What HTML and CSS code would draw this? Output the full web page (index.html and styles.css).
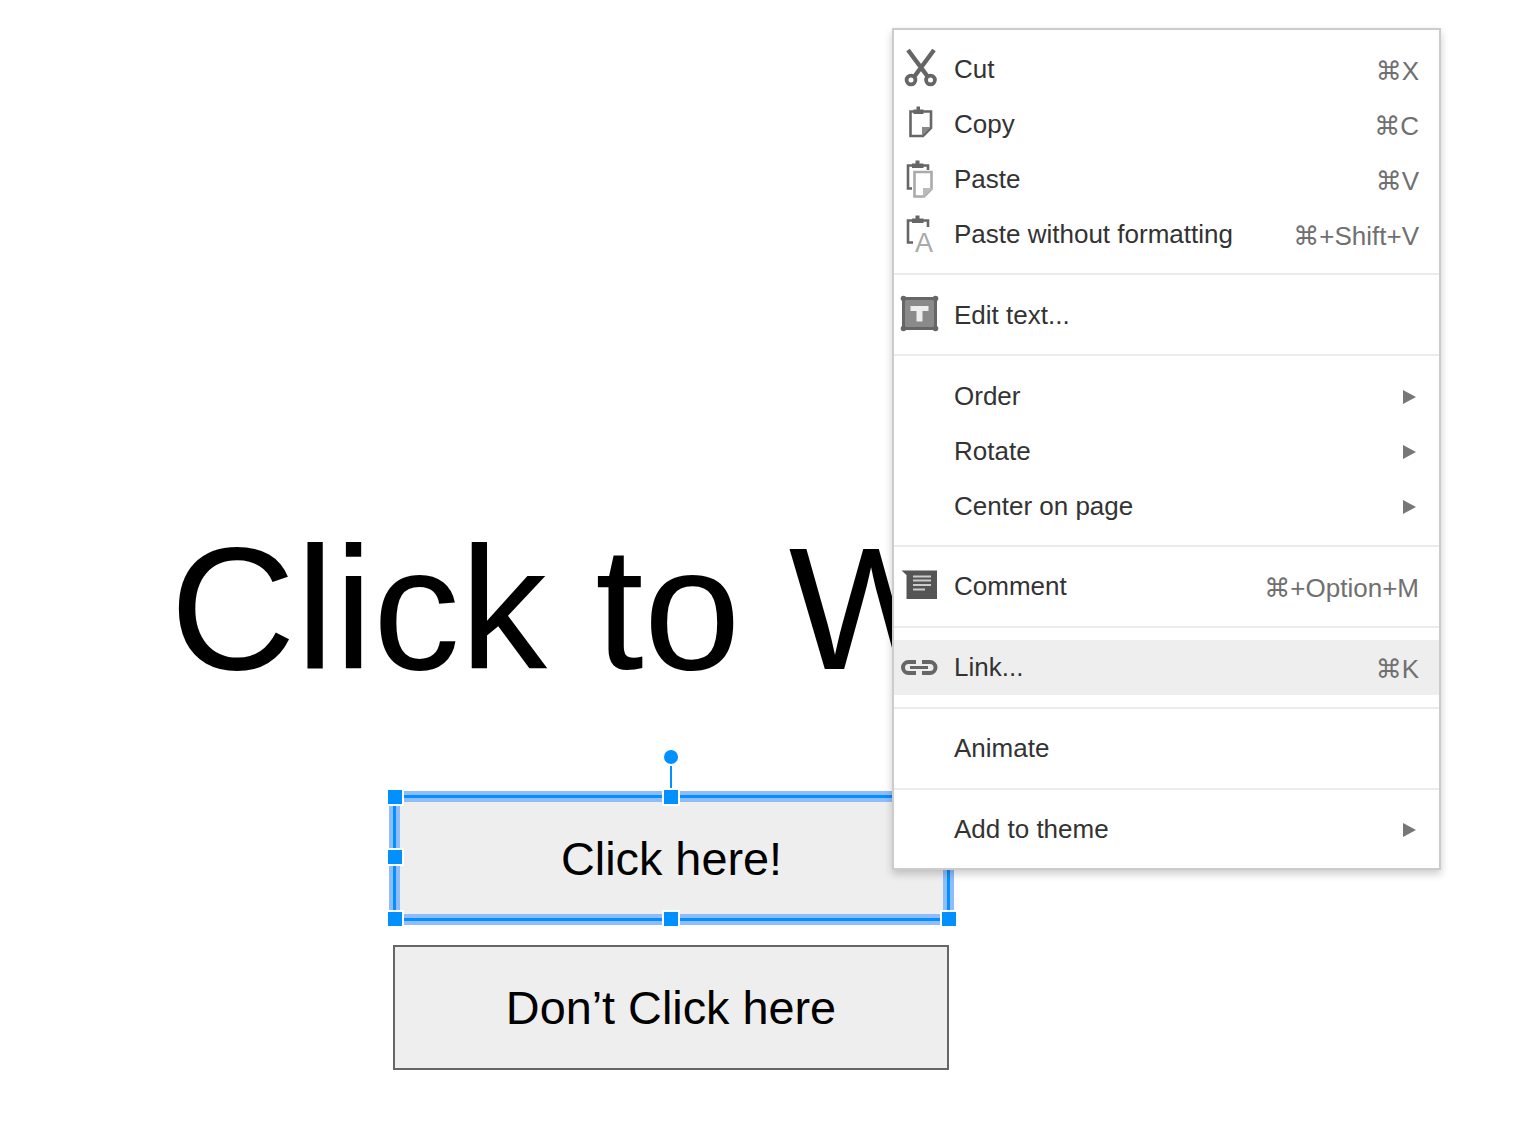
FILE: index.html
```html
<!DOCTYPE html>
<html lang="en">
<head>
    <meta charset="UTF-8">
    <title>Slide context menu</title>
    <link rel="stylesheet" href="styles.css">
</head>
<body>
    <div class="slide">
        <div class="slide-title">Click to W</div>

        <div class="shape shape-selected">
            Click here!
            <span class="rotate-stem"></span>
            <span class="rotate-knob"></span>
            <span class="handle h-tl"></span>
            <span class="handle h-tc"></span>
            <span class="handle h-ml"></span>
            <span class="handle h-bl"></span>
            <span class="handle h-bc"></span>
            <span class="handle h-br"></span>
        </div>

        <div class="shape shape-plain">Don’t Click here</div>

        <div class="menu">
            <div class="menu-item">
                <svg class="icon" viewBox="0 0 36 44">
                    <g fill="none" stroke="#666" stroke-width="3.8">
                        <path d="M7 3 27 30M33 3 13 30" stroke-width="4.4"/>
                        <circle cx="10" cy="33" r="4.4"/>
                        <circle cx="29.5" cy="33" r="4.4"/>
                    </g>
                </svg>
                <span class="label">Cut</span>
                <span class="shortcut"><span class="cmd">⌘</span>X</span>
            </div>
            <div class="menu-item">
                <svg class="icon" viewBox="0 0 36 44">
                    <path d="M13 9.5H9.5V34H22L30 26V9.5H22" fill="none" stroke="#666" stroke-width="2.6"/>
                    <path d="M12.5 12V7.5H15.5V4.5H19V7.5H22.5V12Z" fill="#666"/>
                    <path d="M21 34V25H30Z" fill="#888"/>
                </svg>
                <span class="label">Copy</span>
                <span class="shortcut"><span class="cmd">⌘</span>C</span>
            </div>
            <div class="menu-item">
                <svg class="icon" viewBox="0 0 36 44">
                    <path d="M11 8.5H7V31.5H11M22 8.5H27V13" fill="none" stroke="#666" stroke-width="2.6"/>
                    <path d="M11 11V6.5H14.5V3.5H18.5V6.5H22.5V11Z" fill="#666"/>
                    <path d="M13.5 15H30.5V32L23 39.5H13.5Z" fill="#fff" stroke="#aaa" stroke-width="2.6"/>
                    <path d="M22 40.5V31H32Z" fill="#bbb"/>
                </svg>
                <span class="label">Paste</span>
                <span class="shortcut"><span class="cmd">⌘</span>V</span>
            </div>
            <div class="menu-item">
                <svg class="icon" viewBox="0 0 36 44">
                    <path d="M11 8.5H7V30.5H12M22 8.5H27V15" fill="none" stroke="#666" stroke-width="2.6"/>
                    <path d="M11 11V6.5H14.5V3.5H18.5V6.5H22.5V11Z" fill="#666"/>
                    <text class="icon-letter" x="14" y="39.5">A</text>
                </svg>
                <span class="label">Paste without formatting</span>
                <span class="shortcut"><span class="cmd">⌘</span>+Shift+V</span>
            </div>

            <div class="menu-sep"></div>

            <div class="menu-item">
                <svg class="icon" viewBox="0 0 36 44">
                    <rect x="2.5" y="5.5" width="32" height="30" fill="#8a8a8a" stroke="#666" stroke-width="3"/>
                    <g fill="#666">
                        <circle cx="2.5" cy="5.5" r="2.8"/>
                        <circle cx="34.5" cy="5.5" r="2.8"/>
                        <circle cx="2.5" cy="35.5" r="2.8"/>
                        <circle cx="34.5" cy="35.5" r="2.8"/>
                    </g>
                    <path d="M9.5 13H27.5V18H21.5V28.5H15.5V18H9.5Z" fill="#eee"/>
                </svg>
                <span class="label">Edit text...</span>
            </div>

            <div class="menu-sep"></div>

            <div class="menu-item">
                <span class="icon"></span>
                <span class="label">Order</span>
                <span class="arrow"></span>
            </div>
            <div class="menu-item">
                <span class="icon"></span>
                <span class="label">Rotate</span>
                <span class="arrow"></span>
            </div>
            <div class="menu-item">
                <span class="icon"></span>
                <span class="label">Center on page</span>
                <span class="arrow"></span>
            </div>

            <div class="menu-sep"></div>

            <div class="menu-item lower">
                <svg class="icon" viewBox="0 0 36 44">
                    <path d="M0.5 5.5H36V34H5.5V10Z" fill="#555"/>
                    <path d="M12 11.5H30M12 15.5H30M12 20H30M12 24.5H24" stroke="#ccc" stroke-width="2"/>
                </svg>
                <span class="label">Comment</span>
                <span class="shortcut"><span class="cmd">⌘</span>+Option+M</span>
            </div>

            <div class="menu-sep"></div>

            <div class="menu-item lower active">
                <svg class="icon" viewBox="0 0 36 44">
                    <g fill="none" stroke="#666" stroke-width="4">
                        <path d="M15 16H7.5A5.5 5.5 0 0 0 7.5 27H15"/>
                        <path d="M21 16H29A5.5 5.5 0 0 1 29 27H21"/>
                        <path d="M9 21.5H27" stroke-width="3"/>
                    </g>
                </svg>
                <span class="label">Link...</span>
                <span class="shortcut"><span class="cmd">⌘</span>K</span>
            </div>

            <div class="menu-sep"></div>

            <div class="menu-item lower">
                <span class="icon"></span>
                <span class="label">Animate</span>
            </div>

            <div class="menu-sep"></div>

            <div class="menu-item lower">
                <span class="icon"></span>
                <span class="label">Add to theme</span>
                <span class="arrow"></span>
            </div>
        </div>
    </div>
</body>
</html>
```

FILE: styles.css
```css
html, body {
    margin: 0;
    padding: 0;
    background-color: #ffffff;
}
body {
    font-family: "Liberation Sans", Arial, sans-serif;
    color: #000000;
}
.slide {
    position: relative;
    width: 1516px;
    height: 1142px;
    overflow: hidden;
}
.slide-title {
    position: absolute;
    left: 170px;
    top: 509px;
    font-size: 174px;
    line-height: 200px;
    white-space: nowrap;
}

/* shapes on the slide */
.shape {
    position: absolute;
    display: flex;
    align-items: center;
    justify-content: center;
    box-sizing: border-box;
    background-color: #eeeeee;
    font-size: 46.8px;
}
.shape-plain {
    left: 393px;
    top: 945px;
    width: 556px;
    height: 125px;
    border: 2px solid #666666;
}
.shape-selected {
    left: 393px;
    top: 795px;
    width: 557px;
    height: 126px;
    padding-top: 2px;
    border: 3px solid #0090ff;
    box-shadow: 0 0 0 4px #8fbcfb, inset 0 0 0 4px #8fbcfb;
}
.handle {
    position: absolute;
    width: 14px;
    height: 14px;
    margin: -7px 0 0 -7px;
    background-color: #0090ff;
    box-shadow: 0 0 0 2px #ffffff;
}
.h-tl { left: -1px; top: -1px; }
.h-tc { left: calc(50% - 0.5px); top: -1px; }
.h-ml { left: -1px; top: calc(50% - 1px); }
.h-bl { left: -1px; top: calc(100% + 1px); }
.h-bc { left: calc(50% - 0.5px); top: calc(100% + 1px); }
.h-br { left: calc(100% + 2px); top: calc(100% + 1px); }
.rotate-stem {
    position: absolute;
    left: calc(50% - 1.5px);
    top: -32px;
    width: 2px;
    height: 22px;
    background-color: #0090ff;
}
.rotate-knob {
    position: absolute;
    left: calc(50% - 7.5px);
    top: -48px;
    width: 14px;
    height: 14px;
    border-radius: 50%;
    background-color: #0090ff;
}

/* context menu */
.menu {
    position: absolute;
    left: 892px;
    top: 28px;
    box-sizing: border-box;
    width: 549px;
    padding: 11px 0;
    background-color: #ffffff;
    border: 2px solid #cccccc;
    box-shadow: 0 4px 8px rgba(0, 0, 0, 0.2);
    font-size: 26px;
    color: #333333;
}
.menu-item {
    display: flex;
    align-items: center;
    height: 55px;
    padding: 0 20px 0 7px;
}
.menu-item.active {
    background-color: #eeeeee;
}
.menu-sep {
    height: 2px;
    margin: 12px 0;
    background-color: #ebebeb;
}
.icon {
    flex: none;
    width: 36px;
    height: 44px;
    margin-right: 17px;
    overflow: visible;
}
.icon-letter {
    font-size: 27px;
    fill: #aaaaaa;
}
.label {
    position: relative;
    top: 1px;
    flex: 1;
    white-space: nowrap;
}
.shortcut {
    position: relative;
    top: 3px;
    color: #707070;
    white-space: nowrap;
}
.cmd {
    font-family: "DejaVu Sans", sans-serif;
    font-size: 26px;
    line-height: 1;
}
.arrow {
    position: relative;
    top: 1px;
    width: 0;
    height: 0;
    margin-right: 3px;
    border-left: 13px solid #777777;
    border-top: 7px solid transparent;
    border-bottom: 7px solid transparent;
}
.lower .label { top: 0; }
.lower .shortcut { top: 2px; }
.lower .arrow { top: 0; }
```
